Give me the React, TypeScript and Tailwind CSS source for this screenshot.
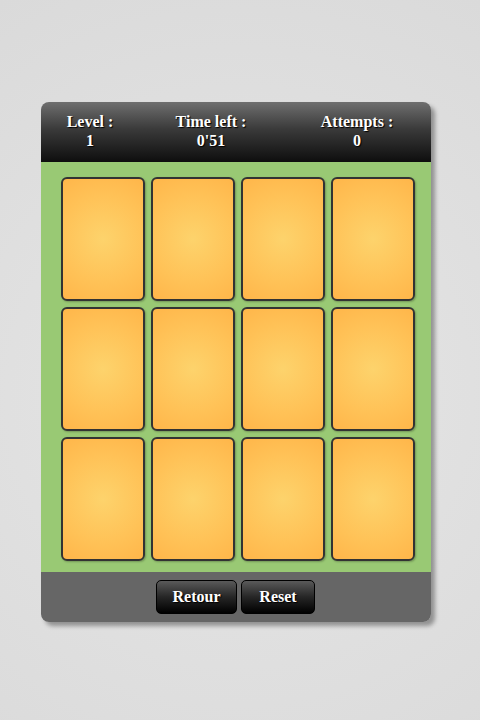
import React from 'react';

const serif = { fontFamily: '"Liberation Serif", "DejaVu Serif", serif' };

function Card() {
  return (
    <div className="w-[84px] h-[124px] rounded-[6px] border-2 border-[#333] bg-[radial-gradient(circle_at_50%_50%,#fdd36c_0%,#ffc257_60%,#ffb64a_100%)] shadow-[1px_1px_2px_rgba(0,0,0,0.25)]" />
  );
}

function Stat({ label, value, width }: { label: string; value: string; width: string }) {
  return (
    <div className={`${width} flex flex-col items-center text-white font-bold text-[16px] leading-[19px] [text-shadow:1px_1px_1px_#000]`}>
      <span>{label}</span>
      <span>{value}</span>
    </div>
  );
}

export default function App() {
  return (
    <div
      className="w-[480px] h-[720px] bg-[radial-gradient(circle_at_50%_55%,#e6e6e6_0%,#dadada_100%)] pt-[102px] pl-[41px]"
      style={serif}
    >
      <div className="w-[390px] rounded-[8px] overflow-hidden shadow-[4px_4px_4px_rgba(0,0,0,0.35)]">
        {/* Header */}
        <div className="h-[60px] flex items-start pt-[10px] bg-[linear-gradient(to_bottom,#6f6f6f_0%,#3a3a3a_45%,#0e0e0e_100%)]">
          <Stat width="w-[98px]" label="Level :" value="1" />
          <Stat width="w-[144px]" label="Time left :" value="0'51" />
          <Stat width="w-[148px]" label="Attempts :" value="0" />
        </div>

        {/* Board */}
        <div className="bg-[#99c974] pt-[15px] pb-[11px] pl-[20px] grid grid-cols-[repeat(4,84px)] gap-x-[6px] gap-y-[6px]">
          {Array.from({ length: 12 }).map((_, i) => (
            <Card key={i} />
          ))}
        </div>

        {/* Footer */}
        <div className="h-[50px] bg-[#666] flex items-start justify-center gap-[4px] pt-[8px] pr-[1px]">
          <button className="w-[81px] h-[34px] rounded-[5px] border border-black bg-[linear-gradient(to_bottom,#5a5a5a_0%,#262626_50%,#000_100%)] text-white font-bold text-[16px] [text-shadow:1px_1px_1px_#000]">
            Retour
          </button>
          <button className="w-[74px] h-[34px] rounded-[5px] border border-black bg-[linear-gradient(to_bottom,#5a5a5a_0%,#262626_50%,#000_100%)] text-white font-bold text-[16px] [text-shadow:1px_1px_1px_#000]">
            Reset
          </button>
        </div>
      </div>
    </div>
  );
}
